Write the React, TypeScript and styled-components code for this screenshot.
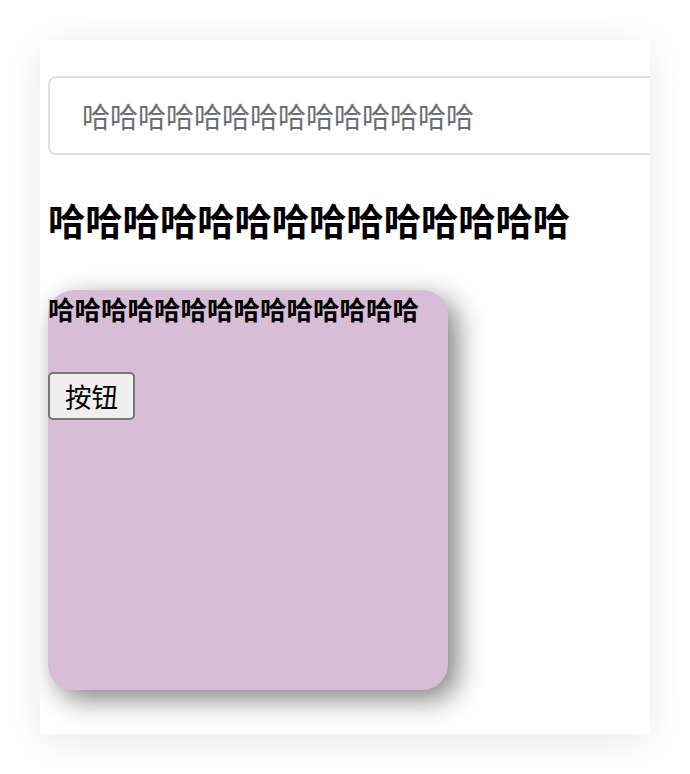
import React from "react";
import styled, { createGlobalStyle } from "styled-components";

const Global = createGlobalStyle`
  html, body { margin: 0; padding: 0; background: #ffffff; }
  body { font-family: "Noto Sans CJK SC", "Noto Sans", sans-serif; }
`;

const Page = styled.div`
  padding: 40px;
`;

const Card = styled.div`
  width: 610px;
  height: 694px;
  box-sizing: border-box;
  background: #ffffff;
  box-shadow: 0 6px 40px rgba(0, 0, 0, 0.09);
  overflow: hidden;
  padding: 36px 0 0 8px;
  display: flex;
  flex-direction: column;
  align-items: flex-start;
`;

const SearchInput = styled.input`
  flex: none;
  width: 640px;
  height: 79px;
  box-sizing: border-box;
  border: 2px solid #dcdfe6;
  border-radius: 8px;
  padding: 0 0 0 32px;
  font-family: "Noto Sans CJK SC", sans-serif;
  font-size: 28px;
  color: #606266;
  outline: none;
  &::placeholder { color: #6f6f73; }
`;

const Title = styled.h3`
  margin: 47px 0 0;
  font-size: 37.3px;
  line-height: 36px;
  font-weight: 700;
  color: #000;
  white-space: nowrap;
`;

const Panel = styled.div`
  margin-top: 52px;
  width: 400px;
  height: 400px;
  flex: none;
  background: #d8bdd7;
  border-radius: 26px;
  box-shadow: 9px 9px 28px rgba(0, 0, 0, 0.5);
  display: flex;
  flex-direction: column;
  align-items: flex-start;
`;

const PanelTitle = styled.h5`
  margin: 5px 0 0;
  font-size: 26.5px;
  line-height: 27px;
  font-weight: 700;
  color: #000;
  white-space: nowrap;
`;

const Button = styled.button`
  margin-top: 50px;
  height: 48px;
  box-sizing: border-box;
  padding: 0 15px;
  border: 2px solid #767676;
  border-radius: 5px;
  background: #efefef;
  font-family: "Noto Sans CJK SC", sans-serif;
  font-size: 26.6px;
  line-height: 1;
  color: #000;
`;

export default function App() {
  const ha = "哈".repeat(14);
  return (
    <>
      <Global />
      <Page>
        <Card>
          <SearchInput placeholder={ha} />
          <Title>{ha}</Title>
          <Panel>
            <PanelTitle>{ha}</PanelTitle>
            <Button>按钮</Button>
          </Panel>
        </Card>
      </Page>
    </>
  );
}
